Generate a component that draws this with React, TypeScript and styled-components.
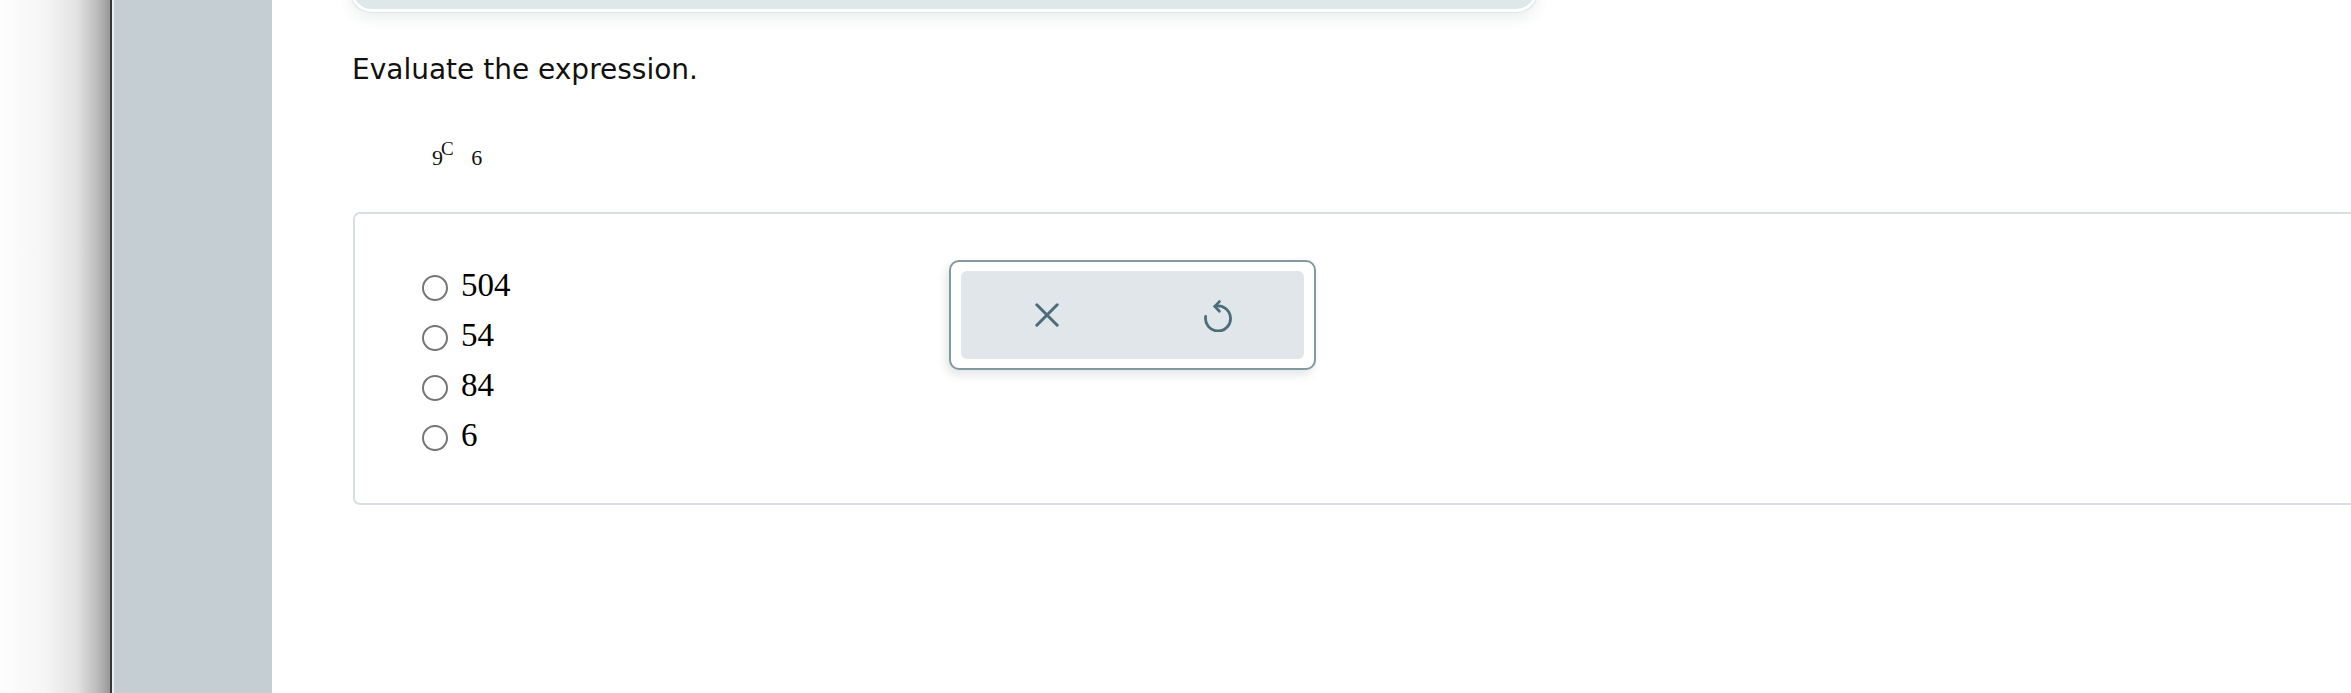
import * as React from "react";
import styled, { createGlobalStyle } from "styled-components";

const GlobalStyle = createGlobalStyle`
  html, body {
    margin: 0;
    padding: 0;
    background: #ffffff;
  }
  body {
    font-family: "DejaVu Sans", Verdana, sans-serif;
  }
`;

const choices = ["504", "54", "84", "6"];

const App: React.FC = () => {
  return (
    <StyledPage>
      <GlobalStyle />
      <StyledShade />
      <StyledDivider />
      <StyledSidebar />
      <StyledMain>
        <StyledTopCard />
        <StyledPrompt>Evaluate the expression.</StyledPrompt>
        <StyledExpression>
          <StyledSub>9</StyledSub>
          <StyledBase>C</StyledBase> <StyledSub>6</StyledSub>
        </StyledExpression>
        <StyledAnswerBox>
          <StyledChoiceList>
            {choices.map((c) => (
              <StyledChoice key={c}>
                <StyledRadio />
                <StyledChoiceText>{c}</StyledChoiceText>
              </StyledChoice>
            ))}
          </StyledChoiceList>
          <StyledToolBox>
            <StyledToolInner>
              <StyledToolButton aria-label="clear">
                <svg width="24" height="24" viewBox="0 0 24 24" fill="none">
                  <path
                    d="M1.8 1.8 L22.2 22.2 M22.2 1.8 L1.8 22.2"
                    stroke="#4b6c79"
                    strokeWidth="3"
                    strokeLinecap="round"
                  />
                </svg>
              </StyledToolButton>
              <StyledToolButton aria-label="undo">
                <svg width="28" height="34" viewBox="0 0 28 34" fill="none">
                  <path
                    d="M10.8 8.4 A12.5 12.5 0 1 1 1.7 18.3"
                    stroke="#4b6c79"
                    strokeWidth="2.8"
                    strokeLinecap="round"
                  />
                  <path
                    d="M15.4 3.6 L10.8 8.4 L15.4 13.2"
                    stroke="#4b6c79"
                    strokeWidth="2.8"
                    strokeLinecap="round"
                    strokeLinejoin="round"
                  />
                </svg>
              </StyledToolButton>
            </StyledToolInner>
          </StyledToolBox>
        </StyledAnswerBox>
      </StyledMain>
    </StyledPage>
  );
};

export default App;

const StyledPage = styled.div`
  display: flex;
  flex-direction: row;
  width: 100%;
  height: 100vh;
  overflow: hidden;
`;

const StyledShade = styled.div`
  width: 110px;
  flex-shrink: 0;
  background: linear-gradient(
    to right,
    #fdfdfd 0%,
    #f6f6f6 40%,
    #e2e2e2 70%,
    #bdbdbd 88%,
    #979797 100%
  );
`;

const StyledDivider = styled.div`
  width: 2px;
  flex-shrink: 0;
  background: #363636;
  border-right: 2px solid #e9eef0;
`;

const StyledSidebar = styled.div`
  width: 158px;
  flex-shrink: 0;
  background: #c4ced3;
`;

const StyledMain = styled.div`
  flex: 1;
  display: flex;
  flex-direction: column;
  padding-left: 80px;
  min-width: 0;
`;

const StyledTopCard = styled.div`
  box-sizing: border-box;
  margin-top: -60px;
  margin-left: -2px;
  width: 1188px;
  height: 72px;
  background: #dfe8e8;
  border: 3px solid #ffffff;
  border-radius: 22px;
  box-shadow: 0 0 0 1px #dde6e6, 0 7px 14px rgba(60, 80, 80, 0.09);
`;

const StyledPrompt = styled.div`
  margin-top: 42px;
  font-family: "DejaVu Sans", Verdana, sans-serif;
  font-size: 28px;
  line-height: 31px;
  color: #111111;
`;

const StyledExpression = styled.div`
  margin-top: 54px;
  margin-left: 80px;
  font-family: "Liberation Serif", "Times New Roman", serif;
  font-size: 22px;
  line-height: 30px;
  color: #111111;
`;

const StyledSub = styled.span`
  font-size: 22px;
`;

const StyledBase = styled.span`
  font-size: 19px;
  line-height: 19px;
  vertical-align: 10px;
  margin-left: -2px;
  margin-right: 12px;
`;

const StyledAnswerBox = styled.div`
  margin-top: 39px;
  margin-left: 1px;
  margin-right: -20px;
  display: flex;
  flex-direction: row;
  align-items: flex-start;
  border: 2px solid #d8dee1;
  border-radius: 7px;
  padding: 46px 0 43px 67px;
`;

const StyledChoiceList = styled.div`
  width: 527px;
  display: flex;
  flex-direction: column;
`;

const StyledChoice = styled.div`
  height: 50px;
  display: flex;
  flex-direction: row;
  align-items: center;
  gap: 13px;
`;

const StyledRadio = styled.span`
  box-sizing: border-box;
  width: 26px;
  height: 26px;
  border-radius: 50%;
  border: 2px solid #767676;
  background: #ffffff;
  transform: translateY(3px);
`;

const StyledChoiceText = styled.span`
  font-family: "Liberation Serif", "Times New Roman", serif;
  font-size: 33px;
  line-height: 50px;
  color: #000000;
`;

const StyledToolBox = styled.div`
  box-sizing: border-box;
  width: 367px;
  height: 110px;
  padding: 9px 10px;
  background: #ffffff;
  border: 2px solid #8399a2;
  border-radius: 10px;
  box-shadow: -3px 5px 10px rgba(40, 60, 70, 0.13);
`;

const StyledToolInner = styled.div`
  height: 100%;
  display: flex;
  flex-direction: row;
  background: #e0e6e9;
  border-radius: 6px;
`;

const StyledToolButton = styled.div`
  flex: 1;
  display: flex;
  align-items: center;
  justify-content: center;
`;
